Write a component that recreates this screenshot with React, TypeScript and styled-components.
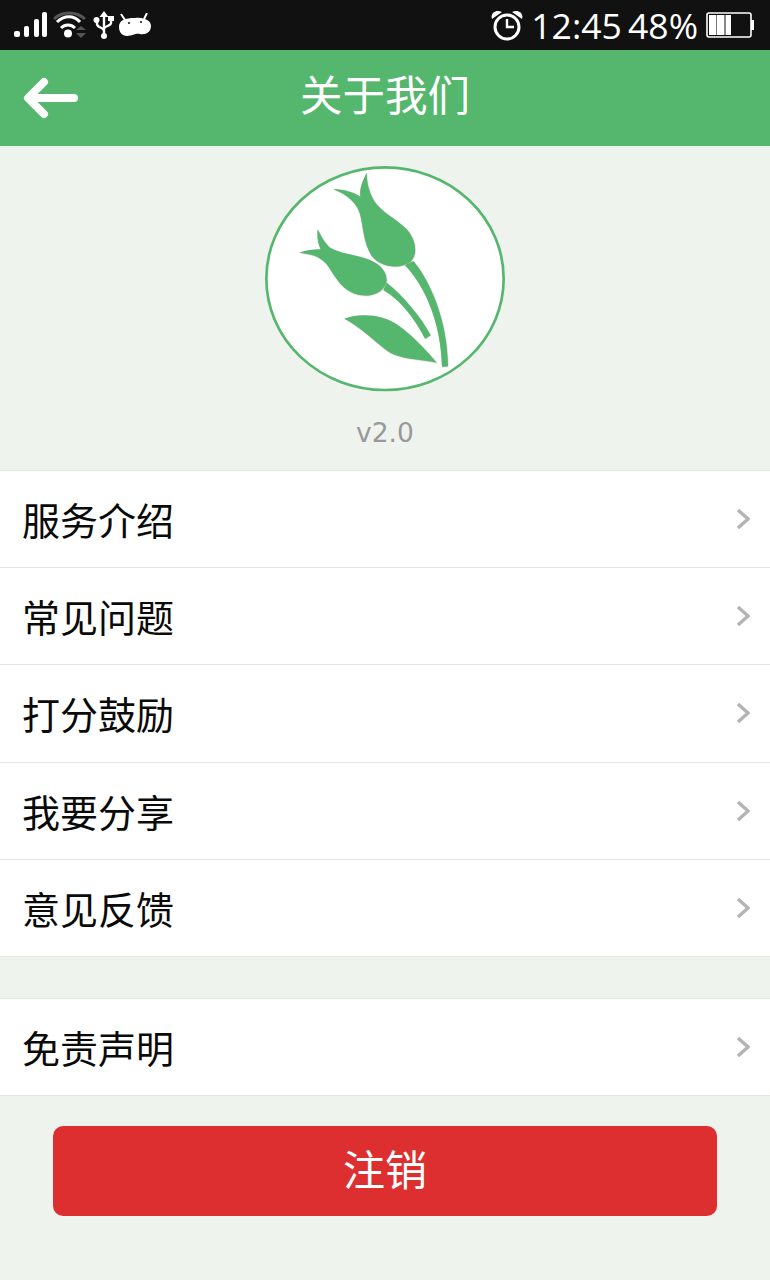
import React from "react";
import styled, { createGlobalStyle } from "styled-components";

const GlobalStyle = createGlobalStyle`
    html, body {
        margin: 0;
        padding: 0;
        background-color: #eff3ee;
    }
    * {
        box-sizing: border-box;
    }
`;

const Page = styled.div`
    width: 770px;
    height: 1280px;
    overflow: hidden;
    display: flex;
    flex-direction: column;
    background-color: #eff3ee;
    font-family: "Noto Sans CJK SC", "Noto Sans", sans-serif;
`;

const StatusBar = styled.div`
    height: 50px;
    flex-shrink: 0;
    background-color: #111111;
    display: flex;
    align-items: center;
    justify-content: space-between;
    padding: 0 16px 0 13px;
    color: #fff;
`;

const StatusGroup = styled.div<{ $gap?: number }>`
    display: flex;
    align-items: center;
    gap: ${(p) => p.$gap ?? 0}px;
`;

const StatusText = styled.span`
    font-family: "Open Sans", "Noto Sans", sans-serif;
    font-size: 35.5px;
    line-height: 50px;
    word-spacing: -3px;
    white-space: nowrap;
`;

const Header = styled.div`
    height: 96px;
    flex-shrink: 0;
    background-color: #55b76e;
    display: flex;
    align-items: center;
    justify-content: center;
    position: relative;
`;

const BackButton = styled.div`
    position: absolute;
    left: 23px;
    top: 26px;
    width: 56px;
    height: 44px;
`;

const Title = styled.h1`
    margin: 0 0 10px;
    font-size: 42.5px;
    font-weight: 400;
    color: #fff;
    line-height: 86px;
`;

const LogoBlock = styled.div`
    height: 324px;
    flex-shrink: 0;
    display: flex;
    flex-direction: column;
    align-items: center;
    padding-top: 20px;
`;

const Version = styled.div`
    font-family: "DejaVu Sans", sans-serif;
    font-size: 26.5px;
    line-height: 40px;
    color: #999999;
    margin-top: 21px;
`;

const MenuGroup = styled.div<{ $top?: number }>`
    background-color: #fff;
    border-top: 1px solid #e3e6e3;
    flex-shrink: 0;
    margin-top: ${(p) => p.$top ?? 0}px;
`;

const MenuRow = styled.div`
    height: 97.2px;
    display: flex;
    align-items: center;
    justify-content: space-between;
    padding: 0 20px 0 22px;
    border-bottom: 1px solid #e3e6e3;
`;

const MenuLabel = styled.span`
    font-size: 38px;
    line-height: 96px;
    color: #0a0a0a;
`;

const LogoutButton = styled.div`
    margin: 30px 53px 0;
    height: 90px;
    flex-shrink: 0;
    border-radius: 10px;
    background-color: #de2f30;
    color: #fff;
    font-size: 42px;
    line-height: 84px;
    padding-bottom: 6px;
    text-align: center;
`;

const Chevron = () => (
    <svg width="14" height="22" viewBox="0 0 14 22">
        <path d="M2 2 L12 11 L2 20" fill="none" stroke="#b4b4b4" strokeWidth="3.4" />
    </svg>
);

const SignalIcon = () => (
    <svg width="36" height="28" viewBox="0 0 36 28">
        <g fill="#fff">
            <rect x="1" y="20" width="6" height="6" rx="2" />
            <rect x="11" y="15" width="5" height="11" rx="2" />
            <rect x="21" y="8" width="5" height="18" rx="2" />
            <rect x="29" y="1" width="5" height="25" rx="2" />
        </g>
    </svg>
);

const WifiIcon = () => (
    <svg width="34" height="28" viewBox="0 0 34 28">
        <path d="M1 8 C9 0 23 0 32 8" fill="none" stroke="#555" strokeWidth="3" />
        <path d="M4 11 C11 4 21 4 27 11" fill="none" stroke="#fff" strokeWidth="3" />
        <path d="M8 17 C12 13 18 13 22 17" fill="none" stroke="#fff" strokeWidth="3" />
        <circle cx="15" cy="22.5" r="4" fill="#fff" />
        <path d="M23 19 L28 15 L33 19 Z M23 22 L33 22 L28 27 Z" fill="#555" />
    </svg>
);

const UsbIcon = () => (
    <svg width="22" height="28" viewBox="0 0 22 28">
        <path d="M11 4 V24 M4 10 V13 C4 17 11 16 11 20 M18 8 V12 C18 15 11 15 11 18" fill="none" stroke="#fff" strokeWidth="2.4" />
        <path d="M11 0 L15.5 6 H6.5 Z" fill="#fff" />
        <circle cx="3.5" cy="9" r="3" fill="#fff" />
        <rect x="15" y="5" width="6" height="5" fill="#fff" />
        <circle cx="11" cy="25" r="3" fill="#fff" />
    </svg>
);

const DroidIcon = () => (
    <svg width="34" height="24" viewBox="0 0 34 24">
        <path d="M3 1 L7 7 M29 0 L26 6" stroke="#fff" strokeWidth="2" />
        <path d="M1 14 C1 7 7 5 17 5 C27 4 33 8 33 13 C33 19 28 22 22 21 C17 20 15 23 9 23 C4 23 1 19 1 14 Z" fill="#fff" />
        <circle cx="11" cy="10" r="1" fill="#111" />
        <circle cx="23" cy="9" r="1" fill="#111" />
    </svg>
);

const AlarmIcon = () => (
    <svg width="32" height="32" viewBox="0 0 32 32">
        <circle cx="16" cy="18" r="12" fill="none" stroke="#fff" strokeWidth="3" />
        <path d="M16 10 V18 H23" fill="none" stroke="#fff" strokeWidth="2.4" />
        <path d="M1 10 C-1 4 5 0 11 3 Z M31 10 C33 4 27 0 21 3 Z" fill="#fff" />
    </svg>
);

const BatteryIcon = () => (
    <svg width="48" height="26" viewBox="0 0 48 26">
        <rect x="1" y="1" width="44" height="24" rx="2" fill="none" stroke="#fff" strokeWidth="1.6" />
        <rect x="45" y="8" width="3" height="10" fill="#fff" />
        <path d="M3 3 H10 V23 H3 Z M11 3 H18 V23 H11 Z M20 3 H25 V23 H20 Z" fill="#fff" />
        <rect x="10" y="3" width="1" height="20" fill="#777" />
        <rect x="18" y="3" width="2" height="20" fill="#888" />
    </svg>
);

const BackArrow = () => (
    <svg width="56" height="44" viewBox="0 0 56 44">
        <path d="M51 22 H6 M21 6 L5 22 L21 38" fill="none" stroke="#fff" strokeWidth="8" strokeLinecap="round" strokeLinejoin="round" />
    </svg>
);

const TulipLogo = () => (
    <svg width="240" height="226" viewBox="0 0 720 678">
        <ellipse cx="360" cy="338" rx="356" ry="334" fill="#fff" stroke="#55b76e" strokeWidth="8" />
        <g fill="#55b76e" style={{ filter: "drop-shadow(1px 1px 1px #b0b0b0)" }}>
            <path d="M305 20 C290 50 283 70 286 92 C265 78 235 70 205 70 C245 85 275 110 285 145 C295 185 295 230 320 270 C345 303 405 312 437 287 C460 262 452 220 425 190 C395 160 360 145 335 115 C315 90 305 55 305 20 Z" />
            <path d="M158 190 C155 215 160 235 167 250 C145 250 125 252 103 260 C135 263 165 270 185 295 C210 330 225 365 265 382 C305 397 350 387 364 350 C370 315 340 290 305 278 C265 265 225 262 195 245 C178 230 168 210 158 190 Z" />
            <path d="M238 458 C285 440 350 445 395 475 C445 510 485 555 515 590 C470 580 425 582 385 565 C345 545 300 490 238 458 Z" />
            <path d="M420 298 C480 360 528 470 531 602 L549 601 C547 460 495 345 445 285 Z" />
            <path d="M355 372 C405 400 455 465 480 518 L497 508 C470 455 415 390 365 350 Z" />
        </g>
    </svg>
);

const mainItems = ["服务介绍", "常见问题", "打分鼓励", "我要分享", "意见反馈"];

export default function App() {
    return (
        <Page>
            <GlobalStyle />
            <StatusBar>
                <StatusGroup $gap={4}>
                    <SignalIcon />
                    <StatusGroup $gap={6}>
                        <WifiIcon />
                        <StatusGroup $gap={3}>
                            <UsbIcon />
                            <DroidIcon />
                        </StatusGroup>
                    </StatusGroup>
                </StatusGroup>
                <StatusGroup $gap={8}>
                    <AlarmIcon />
                    <StatusText>12:45 48%</StatusText>
                    <BatteryIcon />
                </StatusGroup>
            </StatusBar>
            <Header>
                <BackButton>
                    <BackArrow />
                </BackButton>
                <Title>关于我们</Title>
            </Header>
            <LogoBlock>
                <TulipLogo />
                <Version>v2.0</Version>
            </LogoBlock>
            <MenuGroup>
                {mainItems.map((item) => (
                    <MenuRow key={item}>
                        <MenuLabel>{item}</MenuLabel>
                        <Chevron />
                    </MenuRow>
                ))}
            </MenuGroup>
            <MenuGroup $top={41}>
                <MenuRow>
                    <MenuLabel>免责声明</MenuLabel>
                    <Chevron />
                </MenuRow>
            </MenuGroup>
            <LogoutButton>注销</LogoutButton>
        </Page>
    );
}
